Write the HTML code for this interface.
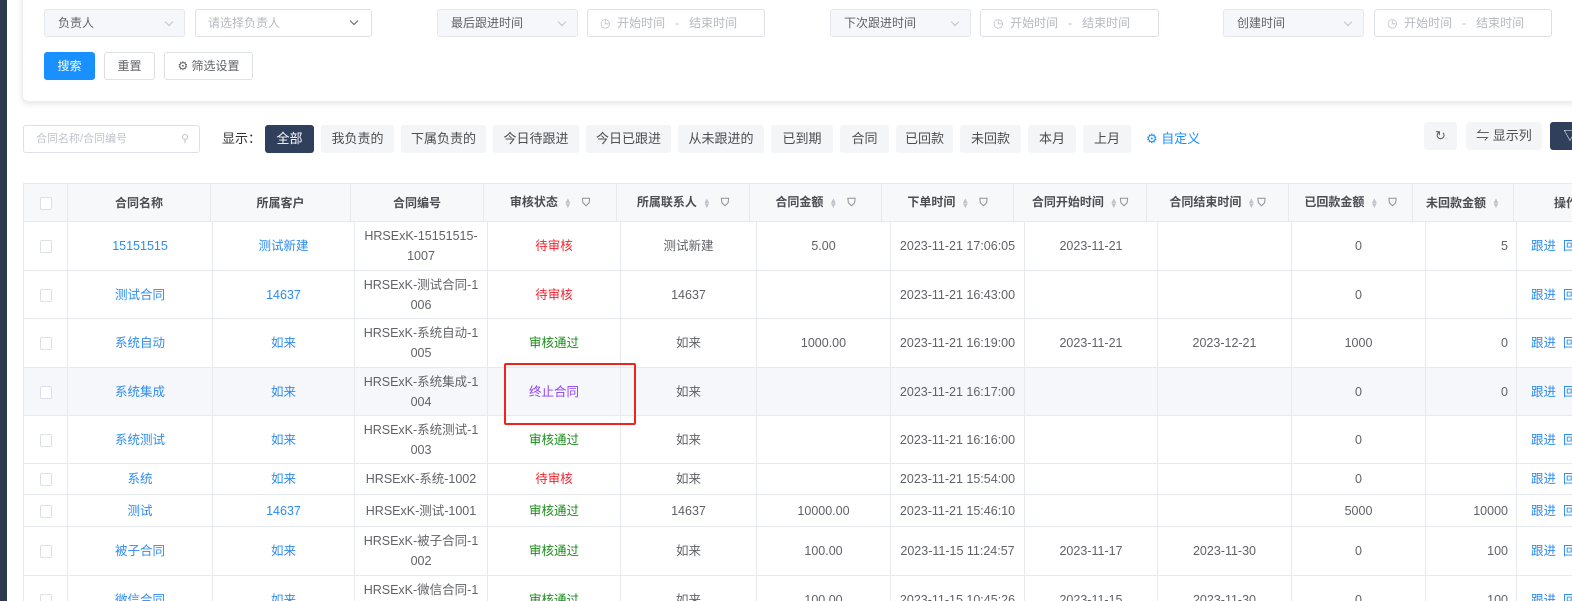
<!DOCTYPE html>
<html><head><meta charset="utf-8">
<style>
*{box-sizing:border-box;margin:0;padding:0}
html,body{width:1572px;height:601px;overflow:hidden}
body{background:#fff;font-family:"Liberation Sans","Noto Sans CJK SC",sans-serif;font-size:12px;color:#606266;position:relative}
.abs{position:absolute}
.strip{left:0;top:0;width:7px;height:601px;background:#2e3a4b}
.card{left:22px;top:-10px;width:1600px;height:112px;border:1px solid #ebeef5;border-radius:6px;box-shadow:0 2px 6px rgba(0,0,0,.1);background:#fff}
.sel{height:28px;border:1px solid #e4e7ed;border-radius:3px;background:#f5f7fa;color:#606266;padding-left:13px;line-height:26px;font-size:12px}
.sel:after{content:"";position:absolute;right:12px;top:9px;width:5px;height:5px;border-right:1px solid #c0c4cc;border-bottom:1px solid #c0c4cc;transform:rotate(45deg)}
.inp{height:28px;border:1px solid #dcdfe6;border-radius:3px;background:#fff;color:#b6b9bf;padding-left:12px;line-height:26px;font-size:12px}
.btn{height:28px;border:1px solid #dcdfe6;border-radius:3px;background:#fff;color:#606266;text-align:center;line-height:26px;font-size:12px}
.tag{top:125px;height:28px;background:#f4f5f7;border-radius:3px;text-align:center;line-height:28px;font-size:13px;color:#4a4d52}
table{border-collapse:collapse;table-layout:fixed;position:absolute}
td,th{border:1px solid #e6e9ee;text-align:center;font-size:12.5px;line-height:20px;overflow:hidden;white-space:nowrap}
th{height:38px;background:#f7f8fa;color:#4a4d52;font-weight:bold;font-size:12px}
td{color:#606266}
.b{color:#2d8cf0}.r{color:#f5222d}.g{color:#198c19}.p{color:#8f3ff0}
.cb{display:inline-block;width:12px;height:13px;border:1px solid #dcdfe6;border-radius:2px;background:#fff;vertical-align:middle}
.srt{display:inline-block;color:#c0c4cc;font-size:8px;line-height:5px;vertical-align:middle;margin-left:6px;width:8px}
.flt{color:#909399;margin-left:10px;font-size:11px}
.ops{color:#2d8cf0;text-align:left;padding-left:14px}
tr.hl td{background:#f5f7fa}
</style></head><body>
<div class="abs strip"></div>
<div class="abs card"></div>
<div class="abs sel" style="left:44px;top:9px;width:141px">负责人</div>
<div class="abs inp" style="left:195px;top:9px;width:177px">请选择负责人<span style="position:absolute;right:14px;top:8px;width:6px;height:6px;border-right:1px solid #606266;border-bottom:1px solid #606266;transform:rotate(45deg)"></span></div>
<div class="abs sel" style="left:437px;top:9px;width:141px">最后跟进时间</div>
<div class="abs inp" style="left:587px;top:9px;width:178px">◷&nbsp; 开始时间&nbsp;&nbsp; - &nbsp;&nbsp;结束时间</div>
<div class="abs sel" style="left:830px;top:9px;width:141px">下次跟进时间</div>
<div class="abs inp" style="left:980px;top:9px;width:179px">◷&nbsp; 开始时间&nbsp;&nbsp; - &nbsp;&nbsp;结束时间</div>
<div class="abs sel" style="left:1223px;top:9px;width:141px">创建时间</div>
<div class="abs inp" style="left:1374px;top:9px;width:178px">◷&nbsp; 开始时间&nbsp;&nbsp; - &nbsp;&nbsp;结束时间</div>
<div class="abs btn" style="left:44px;top:52px;width:51px;background:#1890ff;border-color:#1890ff;color:#fff">搜索</div>
<div class="abs btn" style="left:104px;top:52px;width:51px">重置</div>
<div class="abs btn" style="left:164px;top:52px;width:89px">⚙ 筛选设置</div>

<div class="abs inp" style="left:23px;top:125px;width:177px;height:28px;color:#c0c4cc;font-size:11px">合同名称/合同编号<span style="position:absolute;right:10px;top:0;color:#c0c4cc">⚲</span></div>
<div class="abs" style="left:222px;top:125px;line-height:28px;font-size:13px;color:#303133">显示：</div>
<div class="abs tag" style="left:265px;width:49px;background:#2f3f5c;color:#fff">全部</div>
<div class="abs tag" style="left:321px;width:73px">我负责的</div>
<div class="abs tag" style="left:401px;width:85px">下属负责的</div>
<div class="abs tag" style="left:493px;width:86px">今日待跟进</div>
<div class="abs tag" style="left:586px;width:85px">今日已跟进</div>
<div class="abs tag" style="left:678px;width:86px">从未跟进的</div>
<div class="abs tag" style="left:771px;width:62px">已到期</div>
<div class="abs tag" style="left:840px;width:49px">合同</div>
<div class="abs tag" style="left:896px;width:57px">已回款</div>
<div class="abs tag" style="left:960px;width:61px">未回款</div>
<div class="abs tag" style="left:1028px;width:48px">本月</div>
<div class="abs tag" style="left:1083px;width:48px">上月</div>
<div class="abs" style="left:1146px;top:125px;line-height:28px;font-size:13px;color:#1890ff">⚙ 自定义</div>
<div class="abs tag" style="left:1424px;top:122px;width:33px;color:#606266">↻</div>
<div class="abs tag" style="left:1466px;top:122px;width:76px">⇋ 显示列</div>
<div class="abs tag" style="left:1550px;top:122px;width:40px;background:#2f3f5c;color:#fff">▽</div>

<table style="left:23px;top:183px;width:1600px">
<colgroup><col style="width:44px"><col style="width:143px"><col style="width:140px"><col style="width:133px"><col style="width:133px"><col style="width:133px"><col style="width:132px"><col style="width:132px"><col style="width:133px"><col style="width:142px"><col style="width:124px"><col style="width:101px"><col style="width:110px"></colgroup>
<tr><th><span class="cb"></span></th><th>合同名称</th><th>所属客户</th><th>合同编号</th>
<th>审核状态<span class="srt">▲<br>▼</span><span class="flt">⛉</span></th>
<th>所属联系人<span class="srt">▲<br>▼</span><span class="flt">⛉</span></th>
<th>合同金额<span class="srt">▲<br>▼</span><span class="flt">⛉</span></th>
<th>下单时间<span class="srt">▲<br>▼</span><span class="flt">⛉</span></th>
<th>合同开始时间<span class="srt">▲<br>▼</span><span class="flt" style="margin-left:2px">⛉</span></th>
<th>合同结束时间<span class="srt">▲<br>▼</span><span class="flt" style="margin-left:2px">⛉</span></th>
<th>已回款金额<span class="srt">▲<br>▼</span><span class="flt">⛉</span></th>
<th>未回款金额<span class="srt">▲<br>▼</span></th>
<th style="text-align:left;padding-left:40px">操作</th></tr>
</table>

<table style="left:23px;top:221px;width:1600px">
<colgroup><col style="width:44px"><col style="width:145px"><col style="width:142px"><col style="width:133px"><col style="width:133px"><col style="width:136px"><col style="width:134px"><col style="width:134px"><col style="width:133px"><col style="width:134px"><col style="width:134px"><col style="width:91px"><col style="width:110px"></colgroup>
<tr style="height:49px"><td><span class="cb"></span></td><td class="b">15151515</td><td class="b">测试新建</td><td>HRSExK-15151515-<br>1007</td><td class="r">待审核</td><td>测试新建</td><td>5.00</td><td>2023-11-21 17:06:05</td><td>2023-11-21</td><td></td><td>0</td><td style="text-align:right;padding-right:8px">5</td><td class="ops">跟进 &nbsp;回</td></tr>
<tr style="height:48px"><td><span class="cb"></span></td><td class="b">测试合同</td><td class="b">14637</td><td>HRSExK-测试合同-1<br>006</td><td class="r">待审核</td><td>14637</td><td></td><td>2023-11-21 16:43:00</td><td></td><td></td><td>0</td><td></td><td class="ops">跟进 &nbsp;回</td></tr>
<tr style="height:49px"><td><span class="cb"></span></td><td class="b">系统自动</td><td class="b">如来</td><td>HRSExK-系统自动-1<br>005</td><td class="g">审核通过</td><td>如来</td><td>1000.00</td><td>2023-11-21 16:19:00</td><td>2023-11-21</td><td>2023-12-21</td><td>1000</td><td style="text-align:right;padding-right:8px">0</td><td class="ops">跟进 &nbsp;回</td></tr>
<tr class="hl" style="height:48px"><td><span class="cb"></span></td><td class="b">系统集成</td><td class="b">如来</td><td>HRSExK-系统集成-1<br>004</td><td class="p">终止合同</td><td>如来</td><td></td><td>2023-11-21 16:17:00</td><td></td><td></td><td>0</td><td style="text-align:right;padding-right:8px">0</td><td class="ops">跟进 &nbsp;回</td></tr>
<tr style="height:48px"><td><span class="cb"></span></td><td class="b">系统测试</td><td class="b">如来</td><td>HRSExK-系统测试-1<br>003</td><td class="g">审核通过</td><td>如来</td><td></td><td>2023-11-21 16:16:00</td><td></td><td></td><td>0</td><td></td><td class="ops">跟进 &nbsp;回</td></tr>
<tr style="height:31px"><td><span class="cb"></span></td><td class="b">系统</td><td class="b">如来</td><td>HRSExK-系统-1002</td><td class="r">待审核</td><td>如来</td><td></td><td>2023-11-21 15:54:00</td><td></td><td></td><td>0</td><td></td><td class="ops">跟进 &nbsp;回</td></tr>
<tr style="height:32px"><td><span class="cb"></span></td><td class="b">测试</td><td class="b">14637</td><td>HRSExK-测试-1001</td><td class="g">审核通过</td><td>14637</td><td>10000.00</td><td>2023-11-21 15:46:10</td><td></td><td></td><td>5000</td><td style="text-align:right;padding-right:8px">10000</td><td class="ops">跟进 &nbsp;回</td></tr>
<tr style="height:49px"><td><span class="cb"></span></td><td class="b">被子合同</td><td class="b">如来</td><td>HRSExK-被子合同-1<br>002</td><td class="g">审核通过</td><td>如来</td><td>100.00</td><td>2023-11-15 11:24:57</td><td>2023-11-17</td><td>2023-11-30</td><td>0</td><td style="text-align:right;padding-right:8px">100</td><td class="ops">跟进 &nbsp;回</td></tr>
<tr style="height:49px"><td><span class="cb"></span></td><td class="b">微信合同</td><td class="b">如来</td><td>HRSExK-微信合同-1<br>001</td><td class="g">审核通过</td><td>如来</td><td>100.00</td><td>2023-11-15 10:45:26</td><td>2023-11-15</td><td>2023-11-30</td><td>0</td><td style="text-align:right;padding-right:8px">100</td><td class="ops">跟进 &nbsp;回</td></tr>
</table>
<div class="abs" style="left:504px;top:363px;width:132px;height:62px;border:2px solid #f0231e;border-radius:2px"></div>
</body></html>
